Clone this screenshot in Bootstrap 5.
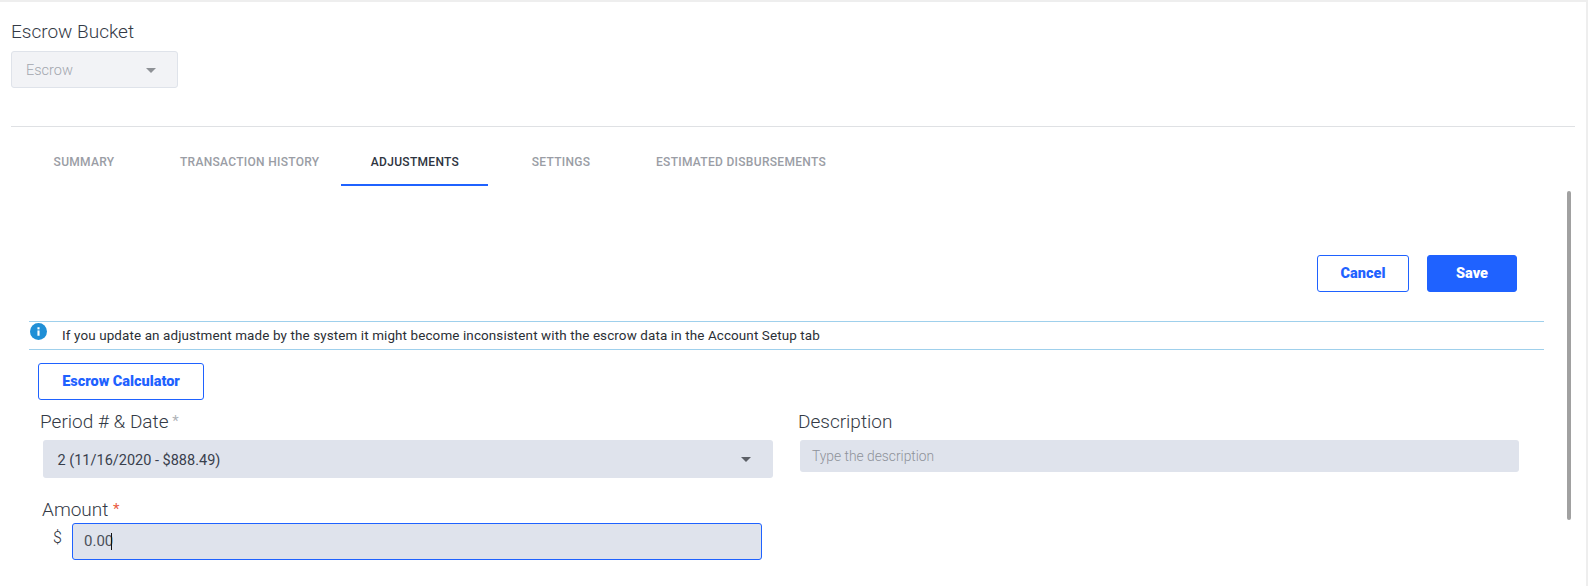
<!DOCTYPE html>
<html lang="en">
<head>
<meta charset="utf-8">
<title>Escrow</title>
<link href="https://cdn.jsdelivr.net/npm/bootstrap@5.3.0/dist/css/bootstrap.min.css" rel="stylesheet">
<style>
html,body{height:100%;overflow:hidden}
body{font-family:Roboto,sans-serif;color:#2e3440;border-top:2px solid #eeeeee;background:#eeeeee}
.app-frame{width:1586px;height:584px;position:relative;padding:0 11px 0 11px;background:#fff}
.field-title{font-weight:300;font-size:19px;line-height:24px;color:#343a46;margin:0}
.bucket-title{padding-top:18px;height:49px}
.bucket-select{width:167px;height:37px;background:#f2f3f6;border:1px solid #dfe3ea;border-radius:3px;color:#a3a7ae;font-size:14.5px;font-weight:300;padding:2px 21px 0 14px}
.caret-down{width:0;height:0;border-left:5.5px solid transparent;border-right:5.5px solid transparent;border-top:5px solid #8e9196}
.top-rule{height:1px;background:#dfe1e4;margin-top:38px}
.tab-strip{height:59px}
.tab-link{font-size:12px;font-weight:500;letter-spacing:.3px;color:#9a9da5;text-decoration:none;height:59px;line-height:70px;text-align:center;border-bottom:2px solid transparent;white-space:nowrap}
.tab-link.is-active{color:#2e3440;border-bottom-color:#1f62ff}
.tab-a{width:146px}
.tab-b{width:183.5px;padding-left:2px}
.tab-c{width:147px;padding-left:2px}
.tab-d{width:145px;padding-left:2px}
.tab-e{width:217px}
.action-row{height:135px;padding-top:69px;padding-right:58px}
.act-btn{height:37px;border-radius:3px;font-size:14.5px;font-weight:900;padding:0;line-height:35px;border:1px solid #1f62ff}
.act-out{background:#fff;color:#1f62ff}
.act-fill{background:#1f62ff;color:#fff}
.cancel-w{width:92px;margin-right:2px}
.save-w{width:90px}
.notice-bar{margin-left:18px;width:1515px;height:29px;border-top:1px solid #9fd0ec;border-bottom:1px solid #9fd0ec;font-size:13.45px;letter-spacing:.115px;color:#2b2f36;position:relative;padding-left:33px;line-height:28px}
.info-dot{position:absolute;left:1px;top:1px;width:17px;height:17px}
.calc-btn{width:166px;margin:13px 0 0 27px;display:block}
.form-area{padding-left:29px}
.period-col{width:733px}
.desc-col{width:719px;margin-left:27px}
.label-period{padding-top:10px;height:40px}
.desc-label{margin-left:-2px}
.req{font-size:15px;color:#b0b3b8;position:relative;top:-2px;font-weight:400;margin-left:-1px}
.req-red{color:#ea5a43;margin-left:0}
.fill-select{height:38px;background:#dfe3ec;border-radius:3px;margin-left:2.5px;padding:3px 22px 0 15px;font-size:14.5px;font-weight:400;color:#39404c;line-height:35px}
.fill-select .caret-down{border-top-color:#5c6067;margin-top:-3px}
.fill-input{height:32px;background:#dfe3ec;border-radius:3px;padding:1px 12px 0;font-size:13.8px;font-weight:300;color:#8e929a;line-height:31px}
.label-amount{padding:20px 0 0 2px;height:45px}
.dollar{width:32px;padding-left:13px;font-size:16px;font-weight:300;line-height:30px}
.amount-box{width:690px;height:37px;background:#dfe3ec;border:1px solid #1f62ff;border-radius:3px;padding:0 11px;font-size:15px;color:#4b505a;line-height:35px}
.text-cursor{display:inline-block;width:1px;height:17px;background:#111;vertical-align:-4px;margin-left:-2px}
.scroll-thumb{position:absolute;left:1567px;top:189px;width:4px;height:329px;background:#a1a1a1;border-radius:2px}
</style>
</head>
<body>
<div class="app-frame">
  <p class="field-title bucket-title">Escrow Bucket</p>
  <div class="bucket-select d-flex align-items-center justify-content-between"><span>Escrow</span><span class="caret-down"></span></div>
  <div class="top-rule"></div>
  <nav class="tab-strip d-flex">
    <a class="tab-link tab-a" href="#">SUMMARY</a>
    <a class="tab-link tab-b" href="#">TRANSACTION HISTORY</a>
    <a class="tab-link tab-c is-active" href="#">ADJUSTMENTS</a>
    <a class="tab-link tab-d" href="#">SETTINGS</a>
    <a class="tab-link tab-e" href="#">ESTIMATED DISBURSEMENTS</a>
  </nav>
  <div class="action-row d-flex justify-content-end gap-3">
    <button type="button" class="btn act-btn act-out cancel-w">Cancel</button>
    <button type="button" class="btn act-btn act-fill save-w">Save</button>
  </div>
  <div class="notice-bar">
    <svg class="info-dot" viewBox="0 0 16 16" aria-hidden="true"><circle cx="8" cy="8" r="8" fill="#1f8fd6"/><rect x="7" y="7" width="2" height="5" fill="#fff"/><rect x="7" y="4" width="2" height="2" fill="#fff"/></svg>
    If you update an adjustment made by the system it might become inconsistent with the escrow data in the Account Setup tab
  </div>
  <button type="button" class="btn act-btn act-out calc-btn">Escrow Calculator</button>
  <div class="form-area d-flex">
    <div class="period-col">
      <p class="field-title label-period">Period # &amp; Date <span class="req">*</span></p>
      <div class="fill-select d-flex justify-content-between align-items-center"><span>2 (11/16/2020 - $888.49)</span><span class="caret-down"></span></div>
      <p class="field-title label-amount">Amount <span class="req req-red">*</span></p>
      <div class="d-flex">
        <div class="dollar">$</div>
        <div class="amount-box">0.00<span class="text-cursor"></span></div>
      </div>
    </div>
    <div class="desc-col">
      <p class="field-title label-period desc-label">Description</p>
      <div class="fill-input">Type the description</div>
    </div>
  </div>
  <div class="scroll-thumb"></div>
</div>
<script src="https://cdn.jsdelivr.net/npm/bootstrap@5.3.0/dist/js/bootstrap.bundle.min.js"></script>
</body>
</html>
